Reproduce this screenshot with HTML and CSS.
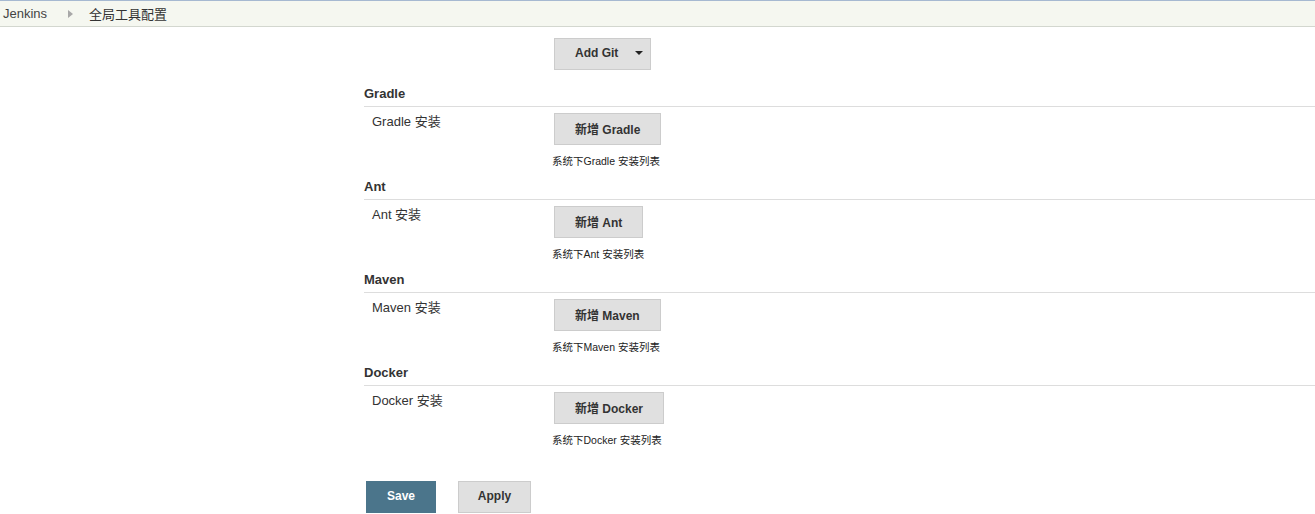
FILE: index.html
```html
<!DOCTYPE html>
<html lang="zh">
<head>
    <meta charset="UTF-8">
    <title>全局工具配置 [Jenkins]</title>
    <link rel="stylesheet" href="styles.css">
</head>
<body>
<div class="breadcrumbs">
    <span class="crumb">Jenkins</span>
    <span class="crumb-arrow"></span>
    <span class="crumb current">全局工具配置</span>
</div>

<div class="main">
    <div class="tool-row top-row">
        <div class="tool-label"></div>
        <div class="tool-setting">
            <button class="btn btn-menu">Add Git <span class="caret"></span></button>
        </div>
    </div>

    <div class="section">
        <div class="section-header">Gradle</div>
        <div class="tool-row">
            <div class="tool-label">Gradle 安装</div>
            <div class="tool-setting">
                <button class="btn">新增 Gradle</button>
                <div class="tool-desc">系统下Gradle 安装列表</div>
            </div>
        </div>
    </div>

    <div class="section">
        <div class="section-header">Ant</div>
        <div class="tool-row">
            <div class="tool-label">Ant 安装</div>
            <div class="tool-setting">
                <button class="btn">新增 Ant</button>
                <div class="tool-desc">系统下Ant 安装列表</div>
            </div>
        </div>
    </div>

    <div class="section">
        <div class="section-header">Maven</div>
        <div class="tool-row">
            <div class="tool-label">Maven 安装</div>
            <div class="tool-setting">
                <button class="btn">新增 Maven</button>
                <div class="tool-desc">系统下Maven 安装列表</div>
            </div>
        </div>
    </div>

    <div class="section">
        <div class="section-header">Docker</div>
        <div class="tool-row">
            <div class="tool-label">Docker 安装</div>
            <div class="tool-setting">
                <button class="btn">新增 Docker</button>
                <div class="tool-desc">系统下Docker 安装列表</div>
            </div>
        </div>
    </div>

    <div class="bottom-buttons">
        <button class="btn btn-save">Save</button>
        <button class="btn btn-apply">Apply</button>
    </div>
</div>
</body>
</html>
```

FILE: styles.css
```css
body {
    margin: 0;
    font-family: "Liberation Sans", Arial, "Noto Sans CJK SC", sans-serif;
    font-size: 13px;
    color: #333;
    background: #fff;
    overflow: hidden;
}
.breadcrumbs {
    display: flex;
    align-items: center;
    height: 25px;
    background: #f5f7f0;
    border-top: 1px solid #a6b9d1;
    border-bottom: 1px solid #d3d7cf;
    padding-left: 3px;
}
.crumb {
    color: #444;
    font-size: 13px;
}
.crumb.current {
    font-size: 13px;
    color: #333;
}
.crumb-arrow {
    width: 0;
    height: 0;
    border-top: 4px solid transparent;
    border-bottom: 4px solid transparent;
    border-left: 5px solid #a8a8a8;
    margin: 0 16px 0 21px;
}
.main {
    padding-left: 364px;
}
.section-header {
    font-weight: bold;
    font-size: 13px;
    line-height: 20px;
    padding-bottom: 2px;
    border-bottom: 1px solid #ddd;
}
.section {
    margin-top: 9px;
}
.top-row + .section {
    margin-top: 14px;
}
.tool-row {
    display: flex;
    padding-top: 6px;
}
.tool-row.top-row {
    padding-top: 11px;
}
.tool-label {
    width: 190px;
    flex: none;
    padding-left: 8px;
    box-sizing: border-box;
    line-height: 18px;
    font-size: 13px;
}
.tool-setting {
    display: flex;
    flex-direction: column;
    align-items: flex-start;
}
.btn {
    height: 32px;
    padding: 0 20px 2px;
    background: #e0e0e0;
    border: 1px solid #ccc;
    color: #333;
    font-family: "Liberation Sans", Arial, "Noto Sans CJK SC", sans-serif;
    font-weight: bold;
    font-size: 12px;
    cursor: pointer;
}
.btn-menu {
    padding-right: 7px;
}
.caret {
    display: inline-block;
    width: 0;
    height: 0;
    border-left: 4px solid transparent;
    border-right: 4px solid transparent;
    border-top: 4px solid #222;
    margin-left: 13px;
    vertical-align: middle;
    position: relative;
    top: -1px;
}
.tool-desc {
    font-size: 10.5px;
    line-height: 14px;
    margin-top: 9px;
    margin-left: -2px;
    color: #222;
}
.bottom-buttons {
    display: flex;
    gap: 22px;
    padding-left: 2px;
    margin-top: 34px;
}
.btn-save {
    width: 70px;
    padding: 0 0 2px;
    background: #4b758b;
    border-color: #4b758b;
    color: #fff;
}
.btn-apply {
    width: 73px;
    padding: 0 0 2px;
}
```
